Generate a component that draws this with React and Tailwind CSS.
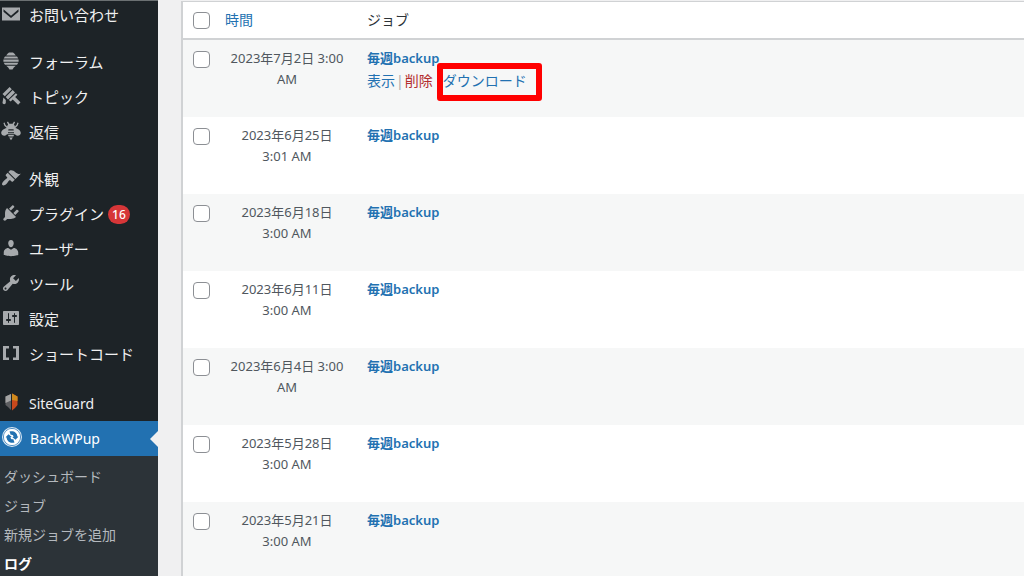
import React from "react";

const icons = {
  mail: (
    <path d="M1 3.500h18v13H1zM2.500 5.200l7.500 6.500 7.500-6.500v2.600L10 14 2.500 7.800z" fillRule="evenodd" />
  ),
  hive: (
    <path d="M8 1.500h4l1.500 1.300 1.300 1.700H5.200l1.300-1.700zM4 5.500h12l1.300 2.100H2.700zM2.400 8.600h15.200v2.100H2.400zM2.700 11.700h14.600L16 13.800H4zM5.200 14.800h9.600l-2 1.800-1.300 1.900h-3l-1.300-1.900z" />
  ),
  brush: (
    <path d="M8.600 1l2.200 2.200-7 7L1.500 8zM11.700 4.100L14 6.400l-7 7-2.300-2.300zM14.900 7.300l1.500 1.500-2.200 2.200 5.300 5.300-2.400 2.500-5.400-5.200-2 2-1.900-1.500zM2.400 11.500l2.400 2.400v2.800c0 1.900-3.300 1.900-3.300 0z" />
  ),
  bee: (
    <path d="M5.900 1.200l1.100-.6 1.400 2.200h3.200L13 .6l1.100.6-1.200 2.200c.6.600.9 1.200 1 2.100l1.700-1.700.8-2.200 1.200.5-1 2.600-2.300 2.200c2.700.6 5.500 2.400 5.500 5.100 0 2.500-3.500 3.600-5.300 1.800l-.6-.6H6.100l-.6.600C3.700 15.600.2 14.500.2 12c0-2.700 2.800-4.500 5.500-5.100L3.400 4.700l-1-2.600 1.200-.5.800 2.200 1.700 1.700c.1-.9.400-1.500 1-2.100zM7.500 8.200l-.3 1.200h5.600l-.3-1.200zM7 11.200v1.100h6v-1.100zM7 14h6l-.6 1.600H7.600zM8.100 16.600h3.800L10 19.200z" fillRule="evenodd" />
  ),
  appearance: (
    <path d="M14.480 11.060L7.410 3.990l1.500-1.500c.5-.56 2.300-.47 3.510.32 1.210.8 1.430 1.280 2.910 2.100 1.180.64 2.450 1.260 4.450.85zm-.71.71L6.700 4.700 4.930 6.470c-.39.39-.39 1.020 0 1.410l1.060 1.060c.39.39.39 1.030 0 1.420-.6.6-1.430 1.110-2.210 1.690-.35.26-.7.53-1.010.84C1.430 14.230.4 16.080 1.400 17.070c.99 1 2.840-.03 4.180-1.360.31-.31.58-.66.85-1.020.57-.78 1.080-1.610 1.690-2.210.39-.39 1.020-.39 1.410 0l1.060 1.060c.39.39 1.020.39 1.410 0z" />
  ),
  plugins: (
    <path d="M13.110 4.360L9.870 7.600 8 5.730l3.240-3.240c.35-.34 1.050-.2 1.560.32.52.51.66 1.210.31 1.550zm-8 1.770l.91-1.120 9.010 9.010-1.190.84c-.71.71-2.630 1.160-3.820 1.160H6.140L4.900 17.260c-.59.59-1.540.59-2.120 0-.59-.58-.59-1.530 0-2.120l1.240-1.240v-3.880c0-1.130.4-3.190 1.090-3.890zm7.260 3.970l3.240-3.240c.34-.35 1.040-.21 1.550.31.52.51.66 1.210.31 1.550l-3.240 3.250z" />
  ),
  users: (
    <path d="M10 9.250c-2.270 0-2.730-3.440-2.730-3.440C7 4.020 7.820 2 9.970 2c2.160 0 2.980 2.020 2.710 3.810 0 0-.41 3.440-2.680 3.440zm0 2.570L12.720 10c2.390 0 4.520 2.330 4.520 4.530v2.490s-3.650 1.130-7.240 1.130c-3.650 0-7.240-1.130-7.240-1.130v-2.490c0-2.250 1.940-4.480 4.470-4.480z" />
  ),
  tools: (
    <path d="M16.680 9.770c-1.340 1.340-3.300 1.670-4.950.99l-5.410 6.520c-.99.99-2.590.99-3.580 0s-.99-2.590 0-3.570l6.520-5.420c-.68-1.650-.35-3.610.99-4.950 1.280-1.280 3.120-1.620 4.720-1.060l-2.890 2.890 2.820 2.820 2.860-2.870c.53 1.580.18 3.390-1.080 4.650zM3.810 16.210c.4.39 1.040.39 1.430 0 .4-.4.4-1.040 0-1.430-.39-.4-1.030-.4-1.430 0-.39.39-.39 1.030 0 1.430z" />
  ),
  settings: (
    <path d="M18 16V4c0-.55-.45-1-1-1H3c-.55 0-1 .45-1 1v12c0 .55.45 1 1 1h14c.55 0 1-.45 1-1zM8 11h1c.55 0 1 .45 1 1s-.45 1-1 1H8v1.500c0 .28-.22.5-.5.5s-.5-.22-.5-.5V13H6c-.55 0-1-.45-1-1s.45-1 1-1h1V5.500c0-.28.22-.5.5-.5s.5.22.5.5V11zm5-2h-1c-.55 0-1-.45-1-1s.45-1 1-1h1V5.500c0-.28.22-.5.5-.5s.5.22.5.5V7h1c.55 0 1 .45 1 1s-.45 1-1 1h-1v5.500c0 .28-.22.5-.5.5s-.5-.22-.5-.5V9z" />
  ),
  shortcode: <path d="M2 3h6v2.500H5v9h3V17H2zM12 3h6v14h-6v-2.500h3v-9h-3z" />,
  siteguard: (
    <>
      <path d="M4.500 4.500L10 2v16l-3-3-2.500-2z" fill="#5c5d60" />
      <path d="M4.500 4.500L10 2v6.500L4.500 11z" fill="#a3a3a3" />
      <path d="M11 1.500l5.500 3V13L14 16l-3 2.500z" fill="#c8481d" />
      <path d="M11 1.500l5.500 3V9L11 8z" fill="#d08a1c" />
    </>
  ),
  backwpup: (
    <>
      <circle cx="10" cy="10" r="10" fill="#dbe8f3" />
      <circle cx="10" cy="10" r="8.500" fill="none" stroke="#4a8bc2" />
      <circle cx="10" cy="10" r="8" fill="#fff" />
      <path d="M7.500 4.600c4-1.200 7.600 1 7.900 5l1 .1-2.900 3-3.300-2.700 1.400-.2c-.2-1.700-1.600-2.400-2.800-1.800z" fill="#2271b1" />
      <path d="M12.500 15.400c-4 1.200-7.600-1-7.900-5l-1-.1 2.900-3 3.300 2.700-1.400.2c.2 1.700 1.600 2.400 2.800 1.800z" fill="#2271b1" />
    </>
  ),
};

const menuGroups = [
  [{ icon: "mail", label: "お問い合わせ" }],
  [
    { icon: "hive", label: "フォーラム" },
    { icon: "brush", label: "トピック" },
    { icon: "bee", label: "返信" },
  ],
  [
    { icon: "appearance", label: "外観" },
    { icon: "plugins", label: "プラグイン", count: 16 },
    { icon: "users", label: "ユーザー" },
    { icon: "tools", label: "ツール" },
    { icon: "settings", label: "設定" },
    { icon: "shortcode", label: "ショートコード" },
  ],
  [
    { icon: "siteguard", label: "SiteGuard", latin: true },
    { icon: "backwpup", label: "BackWPup", latin: true, current: true },
  ],
];

const submenu = ["ダッシュボード", "ジョブ", "新規ジョブを追加", "ログ"];

const logs = [
  { date: "2023年7月2日", time: "3:00 AM", open: true },
  { date: "2023年6月25日", time: "3:01 AM" },
  { date: "2023年6月18日", time: "3:00 AM" },
  { date: "2023年6月11日", time: "3:00 AM" },
  { date: "2023年6月4日", time: "3:00 AM" },
  { date: "2023年5月28日", time: "3:00 AM" },
  { date: "2023年5月21日", time: "3:00 AM" },
];

function MenuItem({ item }) {
  return (
    <li>
      <a
        href="#"
        className={
          "relative flex h-[35px] items-center gap-1 " +
          (item.current ? "bg-[#2271b1] text-white" : "text-[#f0f0f1]")
        }
      >
        <svg
          viewBox="0 0 20 20"
          className={
            "mr-1 mb-1 shrink-0 " +
            (item.current ? "ml-0.5 h-5 w-5" : "ml-px h-5 w-5 text-[#a7aaad]")
          }
          fill="currentColor"
          aria-hidden="true"
        >
          {icons[item.icon]}
        </svg>
        <span className={item.latin ? "text-sm" : "text-[15px]"}>
          {item.label}
        </span>
        {item.count && (
          <span className="flex h-[19px] items-center rounded-full bg-[#d63638] px-1 text-xs font-medium text-white">
            {item.count}
          </span>
        )}
        {item.current && (
          <span className="absolute right-0 border-8 border-transparent border-r-[#f0f0f1]" />
        )}
      </a>
    </li>
  );
}

function Sidebar() {
  return (
    <nav className="w-[158px] shrink-0 overflow-hidden border-t border-[#6b7072] bg-[#1d2327]">
      <div className="-mt-[3px] flex flex-col gap-3">
        {menuGroups.map((group) => (
          <ul key={group[0].label} className="last:mt-0.5">
            {group.map((item) => (
              <MenuItem key={item.label} item={item} />
            ))}
          </ul>
        ))}
      </div>
      <ul className="h-screen bg-[#2c3338] pt-1.5 text-sm">
        {submenu.map((label) => (
          <li key={label}>
            <a
              href="#"
              className={
                "flex h-[29px] items-center pl-1 " +
                (label === "ログ" ? "font-semibold text-white" : "text-[#b4b9be]")
              }
            >
              {label}
            </a>
          </li>
        ))}
      </ul>
    </nav>
  );
}

function Checkbox({ label }) {
  return (
    <input
      type="checkbox"
      aria-label={label}
      className="block h-[17px] w-[17px] appearance-none rounded-[4px] border border-[#8c8f94] bg-white checked:bg-[#2271b1]"
    />
  );
}

function RowActions() {
  return (
    <div className="flex text-sm leading-6">
      <a href="#" className="text-[#2271b1]">
        表示
      </a>
      <span className="px-px text-[#a7aaad]">|</span>
      <a href="#" className="text-[#b32d2e]">
        削除
      </a>
      <a href="#" className="relative ml-2.5 text-[#2271b1]">
        ダウンロード
        <span className="absolute -top-1.5 -left-1.5 h-[38px] w-[105px] rounded-[3px] border-6 border-[#ff0000]" />
      </a>
    </div>
  );
}

function LogTable() {
  return (
    <table className="w-full table-fixed border-separate border-spacing-0 bg-white text-[13px]">
      <colgroup>
        <col className="w-[34px]" />
        <col className="w-[140px]" />
        <col />
      </colgroup>
      <thead>
        <tr className="h-[38px] text-left text-sm">
          <td className="border-b-2 border-[#d0d2d4] pl-2.5">
            <Checkbox label="すべて選択" />
          </td>
          <th className="border-b-2 border-[#d0d2d4] px-2 font-normal">
            <a href="#" className="text-[#2271b1]">
              時間
            </a>
          </th>
          <th className="border-b-2 border-[#d0d2d4] px-2.5 font-normal text-[#2c3338]">
            ジョブ
          </th>
        </tr>
      </thead>
      <tbody>
        {logs.map((log) => (
          <tr key={log.date} className="h-[77px] align-top odd:bg-[#f6f7f7]">
            <td className="pt-[11px] pl-2.5">
              <Checkbox label={log.date} />
            </td>
            <td className="px-[11px] pt-2 text-center leading-[21px] break-keep text-[#50575e]">
              {log.date} {log.time}
            </td>
            <td className="px-2.5 pt-2">
              <a
                href="#"
                className="block leading-[21px] font-semibold text-[#2271b1]"
              >
                毎週backup
              </a>
              {log.open && <RowActions />}
            </td>
          </tr>
        ))}
      </tbody>
    </table>
  );
}

export default function App() {
  return (
    <div className="flex h-screen overflow-hidden bg-[#f0f0f1] font-['Noto_Sans','Noto_Sans_CJK_JP',sans-serif]">
      <Sidebar />
      <main className="min-w-0 flex-1 pt-px pl-[23px]">
        <div className="border-t border-l-2 border-[#d0d2d4]">
          <LogTable />
        </div>
      </main>
    </div>
  );
}
